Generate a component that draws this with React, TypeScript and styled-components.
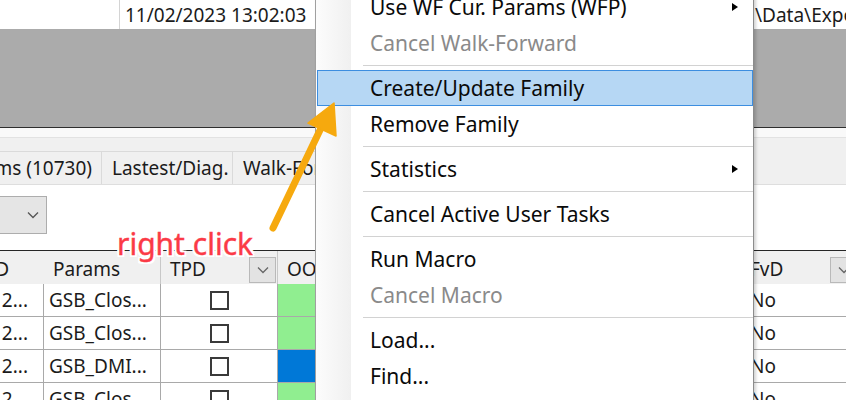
import React from 'react'
import styled, { createGlobalStyle } from 'styled-components'

const GlobalStyle = createGlobalStyle`
  html, body {
    margin: 0;
    padding: 0;
    background: #fff;
  }
  body {
    font-family: 'Noto Sans', 'Open Sans', sans-serif;
  }
`

const Screen = styled.div`
  position: relative;
  width: 846px;
  height: 400px;
  overflow: hidden;
  background: #fff;
  color: #1b1b1b;
  font-size: 19px;
`

const Window = styled.div`
  display: flex;
  flex-direction: column;
  height: 100%;
`

// top status strip
const StatusRow = styled.div`
  display: flex;
  height: 29px;
  flex-shrink: 0;
`

const StatusCell = styled.div<{ $w?: number; $first?: boolean }>`
  width: ${(p) => (p.$w ? `${p.$w}px` : 'auto')};
  flex: ${(p) => (p.$w ? 'none' : '1')};
  border-left: ${(p) => (p.$first ? 'none' : '1px solid #d4d4d4')};
  padding-left: ${(p) => (p.$first ? 0 : 5)}px;
  box-sizing: border-box;
  display: flex;
  align-items: center;
  white-space: nowrap;
  overflow: hidden;
`

const GrayPanel = styled.div`
  height: 98px;
  flex-shrink: 0;
  background: #ababab;
  border-bottom: 1px solid #2e2e2e;
`

const Spacer = styled.div`
  height: 9px;
  flex-shrink: 0;
  background: #f9f9f9;
  border-bottom: 1px solid #e2e2e2;
`

const TabBand = styled.div`
  height: 46px;
  flex-shrink: 0;
  display: flex;
  align-items: flex-end;
  background: #f0f0f0;
  border-bottom: 1px solid #dedede;
`

const Tab = styled.div<{ $w: number; $clip?: boolean }>`
  width: ${(p) => p.$w}px;
  height: 33px;
  box-sizing: border-box;
  border-top: 1px solid #dadada;
  border-right: 1px solid #dadada;
  display: flex;
  align-items: center;
  justify-content: ${(p) => (p.$clip ? 'flex-end' : 'flex-start')};
  padding: 0 9px 0 10px;
  white-space: nowrap;
  overflow: hidden;
  flex-shrink: 0;
`

const FilterArea = styled.div`
  height: 65px;
  flex-shrink: 0;
  padding-top: 11px;
  box-sizing: border-box;
`

const Combo = styled.div`
  width: 47px;
  height: 38px;
  box-sizing: border-box;
  background: #e5e5e5;
  border: 1px solid #adadad;
  border-left: none;
  display: flex;
  align-items: center;
  justify-content: flex-end;
  padding-right: 7px;
  color: #555;
`

// data grid (wider than the window, the right edge is cut off)
const Grid = styled.div`
  display: grid;
  width: 862px;
  grid-template-columns: 44px 117px 117px 464px 120px;
  grid-auto-rows: 33px;
  border-top: 1px solid #262626;
`

const HeadCell = styled.div<{ $clip?: boolean }>`
  height: 34px;
  box-sizing: border-box;
  background: #f0f0f0;
  border-right: 1px solid #c8c8c8;
  border-bottom: 1px solid #a0a0a0;
  display: flex;
  align-items: center;
  justify-content: ${(p) => (p.$clip ? 'flex-end' : 'flex-start')};
  padding: 3px ${(p) => (p.$clip ? 41 : 1)}px 0 9px;
  white-space: nowrap;
  overflow: hidden;
`

const HeadLabel = styled.span`
  flex: 1;
`

const DropBtn = styled.div`
  width: 27px;
  height: 26px;
  margin-top: 2px;
  box-sizing: border-box;
  background: #e3e3e3;
  border: 1px solid #b9b9b9;
  display: flex;
  align-items: center;
  justify-content: center;
  color: #666;
  flex-shrink: 0;
`

const Cell = styled.div<{ $align?: 'left' | 'center' | 'right'; $bg?: string }>`
  box-sizing: border-box;
  border-right: 1px solid #a9a9a9;
  border-bottom: 1px solid #a9a9a9;
  background: ${(p) => p.$bg || '#fff'};
  display: flex;
  align-items: center;
  justify-content: ${(p) =>
    p.$align === 'center' ? 'center' : p.$align === 'right' ? 'flex-end' : 'flex-start'};
  padding: 0 ${(p) => (p.$align === 'right' ? 15 : 0)}px 0 ${(p) => (p.$align === 'left' ? 5 : 0)}px;
  white-space: nowrap;
  overflow: hidden;
`

const FlagCell = styled(Cell)`
  padding-left: 8px;
`

const CheckBox = styled.div`
  width: 19px;
  height: 19px;
  box-sizing: border-box;
  border: 2px solid #3a3a3a;
  background: #fff;
`

// context menu
const Menu = styled.div`
  position: absolute;
  left: 315px;
  top: -14px;
  width: 439px;
  box-sizing: border-box;
  padding: 2px 0;
  border: 1px solid #a0a0a0;
  border-right-color: #8c8c8c;
  background: linear-gradient(to right, #fcfcfc 0, #f0f0f0 35px, #fff 35px);
  box-shadow: 2px 2px 3px rgba(0, 0, 0, 0.18);
  display: flex;
  flex-direction: column;
  font-size: 21px;
  z-index: 2;
`

const MenuItem = styled.div<{ $active?: boolean; $disabled?: boolean }>`
  height: 36px;
  box-sizing: border-box;
  margin: 0 0 0 1px;
  padding: 0 14px 0 52px;
  display: flex;
  align-items: center;
  border: 1px solid ${(p) => (p.$active ? '#3d8ee0' : 'transparent')};
  background: ${(p) => (p.$active ? '#b6d7f4' : 'transparent')};
  color: ${(p) => (p.$disabled ? '#8a8a8a' : '#0a0a0a')};
  white-space: nowrap;
`

const SubArrow = styled.span`
  margin-left: auto;
  width: 0;
  height: 0;
  border-left: 6px solid #000;
  border-top: 4.5px solid transparent;
  border-bottom: 4.5px solid transparent;
`

const Separator = styled.div`
  height: 9px;
  margin-left: 47px;
  display: flex;
  align-items: center;
  &::after {
    content: '';
    flex: 1;
    height: 1px;
    background: #d2d2d2;
  }
`

// annotation overlays
const Overlay = styled.svg`
  position: absolute;
  left: 0;
  top: 0;
  z-index: 3;
  pointer-events: none;
`

const Callout = styled.div`
  position: absolute;
  left: 117px;
  top: 229px;
  z-index: 3;
  font-size: 30px;
  line-height: 1;
  color: #fb3a46;
  white-space: nowrap;
  -webkit-text-stroke: 0.4px #fb3a46;
  text-shadow: 0 0 2px #fff, 2px 0 0 #fff, -2px 0 0 #fff, 0 2px 0 #fff, 0 -2px 0 #fff,
    2px 2px 0 #fff, -2px -2px 0 #fff, 2px -2px 0 #fff, -2px 2px 0 #fff;
`

const Chevron = () => (
  <svg width="12" height="8" viewBox="0 0 12 8">
    <path d="M1 1.5 L6 6.5 L11 1.5" fill="none" stroke="currentColor" strokeWidth="1.3" />
  </svg>
)

const rows = [
  { id: '2...', params: 'GSB_Clos...', oo: '#90ee90', fvd: 'No' },
  { id: '2...', params: 'GSB_Clos...', oo: '#90ee90', fvd: 'No' },
  { id: '2...', params: 'GSB_DMI...', oo: '#0078d7', fvd: 'No' },
  { id: '2...', params: 'GSB_Clos...', oo: '#90ee90', fvd: 'No' }
]

type Entry = { label?: string; sep?: boolean; sub?: boolean; disabled?: boolean; active?: boolean }

const menu: Entry[] = [
  { label: 'Use WF Cur. Params (WFP)', sub: true },
  { label: 'Cancel Walk-Forward', disabled: true },
  { sep: true },
  { label: 'Create/Update Family', active: true },
  { label: 'Remove Family' },
  { sep: true },
  { label: 'Statistics', sub: true },
  { sep: true },
  { label: 'Cancel Active User Tasks' },
  { sep: true },
  { label: 'Run Macro' },
  { label: 'Cancel Macro', disabled: true },
  { sep: true },
  { label: 'Load...' },
  { label: 'Find...' },
  { label: 'Export...' }
]

export default function App() {
  return (
    <Screen>
      <GlobalStyle />
      <Window>
        <StatusRow>
          <StatusCell $w={119} $first />
          <StatusCell $w={196}>11/02/2023 13:02:03</StatusCell>
          <StatusCell $w={437}>Ready</StatusCell>
          <StatusCell style={{ paddingLeft: 2 }}>\Data\Exports\Results</StatusCell>
        </StatusRow>
        <GrayPanel />
        <Spacer />
        <TabBand>
          <Tab $w={102} $clip>
            Params (10730)
          </Tab>
          <Tab $w={131}>Lastest/Diag.</Tab>
          <Tab $w={150}>Walk-Forward</Tab>
        </TabBand>
        <FilterArea>
          <Combo>
            <Chevron />
          </Combo>
        </FilterArea>
        <Grid>
          <HeadCell $clip>ID</HeadCell>
          <HeadCell>Params</HeadCell>
          <HeadCell>
            <HeadLabel>TPD</HeadLabel>
            <DropBtn>
              <Chevron />
            </DropBtn>
          </HeadCell>
          <HeadCell>OOS</HeadCell>
          <HeadCell style={{ paddingLeft: 8, paddingRight: 4 }}>
            <HeadLabel>FvD</HeadLabel>
            <DropBtn>
              <Chevron />
            </DropBtn>
          </HeadCell>
          {rows.map((r, i) => (
            <React.Fragment key={i}>
              <Cell $align="right">{r.id}</Cell>
              <Cell $align="left">{r.params}</Cell>
              <Cell $align="center">
                <CheckBox />
              </Cell>
              <Cell $bg={r.oo} />
              <FlagCell>{r.fvd}</FlagCell>
            </React.Fragment>
          ))}
        </Grid>
      </Window>

      <Menu>
        {menu.map((m, i) =>
          m.sep ? (
            <Separator key={i} />
          ) : (
            <MenuItem key={i} $active={m.active} $disabled={m.disabled}>
              {m.label}
              {m.sub && <SubArrow />}
            </MenuItem>
          )
        )}
      </Menu>

      <Callout>right click</Callout>

      <Overlay width="846" height="400" viewBox="0 0 846 400">
        <line x1="273" y1="228" x2="321" y2="128" stroke="#f6a90e" strokeWidth="7" strokeLinecap="round" />
        <polygon points="334,103 308,123 336,136" fill="#f6a90e" stroke="#f6a90e" strokeWidth="1.5" strokeLinejoin="round" />
      </Overlay>
    </Screen>
  )
}
